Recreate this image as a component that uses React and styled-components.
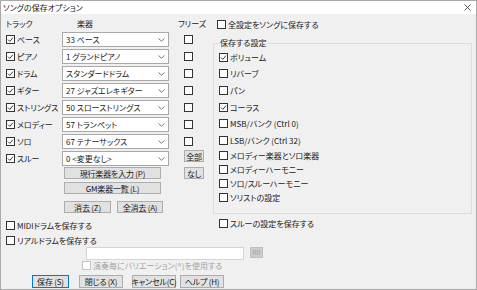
import React from "react";
import styled, { createGlobalStyle } from "styled-components";

const GlobalStyle = createGlobalStyle`
  html, body {
    margin: 0;
    padding: 0;
    background: #ffffff;
  }
  body {
    font-family: "Noto Sans CJK JP", "Noto Sans", sans-serif;
    font-size: 8px;
    font-feature-settings: "palt" 1;
    color: #1a1a1a;
  }
`;

const Window = styled.div`
  width: 477px;
  height: 290px;
  box-sizing: border-box;
  border: 1px solid #a9a9a9;
  background: #f0f0f0;
  display: flex;
  flex-direction: column;
  overflow: hidden;
`;

const TitleBar = styled.div`
  height: 13px;
  flex: none;
  background: #ffffff;
  display: flex;
  align-items: center;
  justify-content: space-between;
  padding: 0 5px 0 2px;
`;

const Title = styled.span`
  font-size: 8px;
  line-height: 13px;
`;

const Body = styled.div`
  padding-top: 3px;
  display: flex;
  flex-direction: column;
`;

const Top = styled.div`
  display: flex;
`;

const LeftCol = styled.div`
  width: 212px;
  box-sizing: border-box;
  padding-left: 5px;
  display: flex;
  flex-direction: column;
`;

const RightCol = styled.div`
  flex: 1;
  padding-right: 4px;
  display: flex;
  flex-direction: column;
`;

const TrackGrid = styled.div`
  display: grid;
  grid-template-columns: 56px 107px 44px;
  grid-template-rows: 14px repeat(8, 17px) 15px 19px 13px;
  align-items: center;
`;

const HeadCell = styled.div`
  padding-left: ${(p) => p.$pl || 0}px;
  line-height: 14px;
`;

const FreezeCell = styled.div`
  padding-left: 15px;
  display: flex;
  align-items: center;
  align-self: ${(p) => (p.$top ? "start" : "center")};
`;

const CheckRow = styled.div`
  height: ${(p) => p.$h || 14}px;
  margin-top: ${(p) => p.$mt || 0}px;
  padding-left: ${(p) => p.$pl || 0}px;
  display: flex;
  align-items: center;
  gap: 2px;
  color: ${(p) => (p.$disabled ? "#a3a3a3" : "#1a1a1a")};
  white-space: nowrap;
`;

const Box = styled.span`
  width: 9px;
  height: 9px;
  box-sizing: border-box;
  flex: none;
  border: 1px solid ${(p) => (p.$disabled ? "#c4c4c4" : "#333")};
  background: #ffffff;
  display: flex;
  align-items: center;
  justify-content: center;
`;

const SelectBox = styled.div`
  height: 15px;
  box-sizing: border-box;
  border: 1px solid #a8a8a8;
  background: #ffffff;
  display: flex;
  align-items: center;
  justify-content: space-between;
  padding: 0 3px 0 3px;
  white-space: nowrap;
`;

const Btn = styled.div`
  width: ${(p) => p.$w}px;
  height: ${(p) => p.$h || 12}px;
  margin-left: ${(p) => p.$ml || 0}px;
  box-sizing: border-box;
  border: 1px solid ${(p) => (p.$primary ? "#0078d7" : "#adadad")};
  background: #e1e1e1;
  display: flex;
  align-items: center;
  justify-content: center;
  white-space: nowrap;
  letter-spacing: -0.2px;
  align-self: start;
`;

const BtnPair = styled.div`
  display: flex;
  gap: 6px;
  padding-left: 2px;
  align-self: start;
`;

const Group = styled.fieldset`
  margin: 6px 0 0 0;
  padding: 0 0 8px 5px;
  border: 1px solid #dcdcdc;
  min-width: 0;
`;

const Legend = styled.legend`
  padding: 0 1px;
  line-height: 12px;
`;

const InputRow = styled.div`
  height: 13px;
  padding-left: 80px;
  display: flex;
  align-items: flex-start;
  gap: 6px;
`;

const TextInput = styled.div`
  width: 158px;
  height: 13px;
  box-sizing: border-box;
  border: 1px solid #d4d4d4;
  background: #ffffff;
`;

const RdButton = styled.div`
  width: 13px;
  height: 11px;
  box-sizing: border-box;
  border: 1px solid #bfbfbf;
  background: #cccccc;
  color: #a3a3a3;
  font-size: 6px;
  display: flex;
  align-items: center;
  justify-content: center;
`;

const Bottom = styled.div`
  padding-left: 5px;
  display: flex;
  flex-direction: column;
`;

const ButtonBar = styled.div`
  margin-top: 5px;
  padding-left: 26px;
  display: flex;
`;

const Check = ({ checked, disabled, label, ...rest }) => (
  <CheckRow $disabled={disabled} {...rest}>
    <Box $disabled={disabled}>
      {checked && (
        <svg width="7" height="7" viewBox="0 0 7 7">
          <path d="M1 3.6 L2.8 5.4 L6 1.6" fill="none" stroke="#222" strokeWidth="0.9" />
        </svg>
      )}
    </Box>
    {label && <span>{label}</span>}
  </CheckRow>
);

const Select = ({ value }) => (
  <SelectBox>
    <span>{value}</span>
    <svg width="7" height="4" viewBox="0 0 7 4">
      <path d="M0.5 0.5 L3.5 3.2 L6.5 0.5" fill="none" stroke="#555" strokeWidth="0.8" />
    </svg>
  </SelectBox>
);

const tracks = [
  ["ベース", "33 ベース"],
  ["ピアノ", "1 グランドピアノ"],
  ["ドラム", "スタンダードドラム"],
  ["ギター", "27 ジャズエレキギター"],
  ["ストリングス", "50 スローストリングス"],
  ["メロディー", "57 トランペット"],
  ["ソロ", "67 テナーサックス"],
  ["スルー", "0 <変更なし>"],
];

const settings = [
  ["ボリューム", true],
  ["リバーブ", false],
  ["パン", false],
  ["コーラス", true],
  ["MSB/バンク (Ctrl 0)", false],
  ["LSB/バンク (Ctrl 32)", false],
];

const moreSettings = [
  "メロディー楽器とソロ楽器",
  "メロディーハーモニー",
  "ソロ/スルーハーモニー",
  "ソリストの設定",
];

const App = () => (
  <>
    <GlobalStyle />
    <Window>
      <TitleBar>
        <Title>ソングの保存オプション</Title>
        <svg width="7" height="7" viewBox="0 0 7 7">
          <path d="M0.5 0.5 L6.5 6.5 M6.5 0.5 L0.5 6.5" stroke="#333" strokeWidth="0.8" />
        </svg>
      </TitleBar>
      <Body>
        <Top>
          <LeftCol>
            <TrackGrid>
              <HeadCell>トラック</HeadCell>
              <HeadCell $pl={15}>楽器</HeadCell>
              <HeadCell $pl={9}>フリーズ</HeadCell>
              {tracks.map(([name, inst], i) => (
                <React.Fragment key={name}>
                  <Check checked label={name} />
                  <Select value={inst} />
                  {i < 7 ? (
                    <FreezeCell>
                      <Box />
                    </FreezeCell>
                  ) : (
                    <FreezeCell $top>
                      <Btn $w={20}>全部</Btn>
                    </FreezeCell>
                  )}
                </React.Fragment>
              ))}
              <span />
              <Btn $w={97} $ml={2}>現行楽器を入力 (P)</Btn>
              <FreezeCell $top>
                <Btn $w={20}>なし</Btn>
              </FreezeCell>
              <span />
              <Btn $w={97} $ml={2}>GM楽器一覧 (L)</Btn>
              <span />
              <span />
              <BtnPair>
                <Btn $w={47}>消去 (Z)</Btn>
                <Btn $w={46}>全消去 (A)</Btn>
              </BtnPair>
              <span />
            </TrackGrid>
            <Check $mt={4} label="MIDIドラムを保存する" />
          </LeftCol>
          <RightCol>
            <Check $pl={4} label="全設定をソングに保存する" />
            <Group>
              <Legend>保存する設定</Legend>
              {settings.map(([label, on]) => (
                <Check key={label} $h={16.6} checked={on} label={label} />
              ))}
              {moreSettings.map((label) => (
                <Check key={label} $h={14} label={label} />
              ))}
            </Group>
            <Check $mt={3} $pl={6} label="スルーの設定を保存する" />
          </RightCol>
        </Top>
        <Bottom>
          <Check $mt={1} label="リアルドラムを保存する" />
          <InputRow>
            <TextInput />
            <RdButton>RD</RdButton>
          </InputRow>
          <Check $h={10} $pl={76} disabled label="演奏毎にバリエーション(^)を使用する" />
          <ButtonBar>
            <Btn $w={37} $h={13} $primary>保存 (S)</Btn>
            <Btn $w={44} $h={13} $ml={10}>閉じる (X)</Btn>
            <Btn $w={44} $h={13} $ml={9}>キャンセル(C)</Btn>
            <Btn $w={44} $h={13} $ml={4}>ヘルプ (H)</Btn>
          </ButtonBar>
        </Bottom>
      </Body>
    </Window>
  </>
);

export default App;
